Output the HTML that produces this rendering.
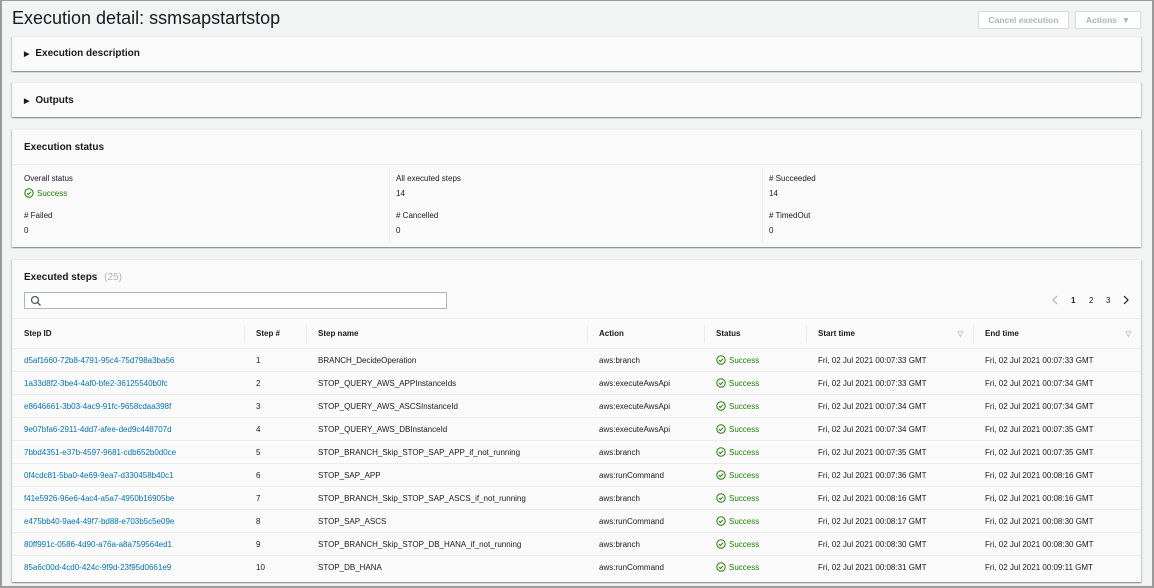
<!DOCTYPE html>
<html><head><meta charset="utf-8"><style>
*{box-sizing:border-box;margin:0;padding:0}
body{width:1154px;height:588px;overflow:hidden;background:#f2f3f3;font-family:"Liberation Sans",sans-serif;color:#16191f;position:relative}
.frame{position:absolute;left:0;top:0;width:1154px;height:588px;border:1px solid #9a9a9a;border-width:1px 2px 2px 2px;pointer-events:none;z-index:5}
.abs{position:absolute}
h1{position:absolute;left:12px;top:8px;font-size:18px;font-weight:normal;color:#16191f}
.btn{position:absolute;top:11px;height:18px;border:1px solid #d5dbdb;background:#fff;color:#aab7b8;font-size:8.5px;font-weight:bold;text-align:center;line-height:16px}
.card{position:absolute;left:12px;width:1129px;background:#fafafa;box-shadow:0 1px 1px 0 rgba(0,28,36,.3),1px 1px 1px 0 rgba(0,28,36,.15),-1px 1px 1px 0 rgba(0,28,36,.15);border-top:1px solid #eaeded}
.ct{position:absolute;font-size:10px;font-weight:bold}
.lbl{position:absolute;font-size:8px;color:#16191f}
.ok{color:#1d8102}
svg.ck{vertical-align:-2px;margin-right:3px}
table{position:absolute;left:0;top:58px;width:1129px;border-collapse:collapse;font-size:8px}
th{text-align:left;font-weight:bold;height:30px;padding-left:12px;color:#16191f;border-top:1px solid #eaeded;border-bottom:1px solid #eaeded;position:relative;font-size:8px}
td{height:23px;padding-left:12px;border-bottom:1px solid #eaeded}
th .d{position:absolute;left:0;top:6px;height:18px;border-left:1px solid #eaeded}
td.id{color:#0073bb}
.tri{position:absolute;right:10px;top:11px;color:#aab7b8;font-size:7px}
</style></head><body>
<div class="frame"></div>
<h1>Execution detail: ssmsapstartstop</h1>
<div class="btn" style="left:978px;width:91px">Cancel execution</div>
<div class="btn" style="left:1075px;width:66px">Actions &nbsp;▼</div>

<div class="card" style="top:36px;height:35px"><div class="ct" style="left:12px;top:11px"><span style="font-size:7px;margin-right:6px">▶</span>Execution description</div></div>
<div class="card" style="top:82px;height:35px"><div class="ct" style="left:12px;top:12px"><span style="font-size:7px;margin-right:6px">▶</span>Outputs</div></div>

<div class="card" style="top:129px;height:118px">
<div class="ct" style="left:12px;top:12px">Execution status</div>
<div class="abs" style="left:0;top:34px;width:1129px;border-top:1px solid #eaeded"></div>
<div class="abs" style="left:377px;top:38px;height:74px;border-left:1px solid #eaeded"></div>
<div class="abs" style="left:750px;top:38px;height:74px;border-left:1px solid #eaeded"></div>
<div class="lbl" style="left:12px;top:44px">Overall status</div>
<div class="lbl ok" style="left:12px;top:58px"><svg class="ck" width="10" height="10" viewBox="0 0 10 10"><circle cx="5" cy="5" r="4.2" fill="none" stroke="#1d8102" stroke-width="1"/><path d="M3 5.1l1.4 1.4L7 3.8" fill="none" stroke="#1d8102" stroke-width="1"/></svg>Success</div>
<div class="lbl" style="left:12px;top:81px"># Failed</div>
<div class="lbl" style="left:12px;top:96px">0</div>
<div class="lbl" style="left:384px;top:44px">All executed steps</div>
<div class="lbl" style="left:384px;top:59px">14</div>
<div class="lbl" style="left:384px;top:81px"># Cancelled</div>
<div class="lbl" style="left:384px;top:96px">0</div>
<div class="lbl" style="left:757px;top:44px"># Succeeded</div>
<div class="lbl" style="left:757px;top:59px">14</div>
<div class="lbl" style="left:757px;top:81px"># TimedOut</div>
<div class="lbl" style="left:757px;top:96px">0</div>
</div>

<div class="card" style="top:259px;height:323px">
<div class="ct" style="left:12px;top:12px">Executed steps <span style="font-weight:normal;color:#aab7b8;margin-left:4px">(25)</span></div>
<div class="abs" style="left:12px;top:32px;width:423px;height:17px;border:1px solid #aab7b8;background:#fff"><svg width="12" height="12" viewBox="0 0 12 12" style="position:absolute;left:5px;top:2px"><circle cx="5" cy="5" r="3.5" fill="none" stroke="#545b64" stroke-width="1.3"/><path d="M7.5 7.5l3 3" stroke="#545b64" stroke-width="1.3"/></svg></div>
<svg class="abs" style="left:1040px;top:34px" width="80" height="12" viewBox="0 0 80 12"><path d="M5 2L1 6l4 4" fill="none" stroke="#aab7b8" stroke-width="1.2"/><text x="19" y="9" font-size="8" font-weight="bold" fill="#16191f" font-family="Liberation Sans">1</text><text x="37" y="9" font-size="8" fill="#16191f" font-family="Liberation Sans">2</text><text x="54" y="9" font-size="8" fill="#16191f" font-family="Liberation Sans">3</text><path d="M72 2l4 4-4 4" fill="none" stroke="#16191f" stroke-width="1.2"/></svg>
<table>
<tr><th style="width:232px">Step ID</th><th style="width:62px"><span class="d"></span>Step #</th><th style="width:281px"><span class="d"></span>Step name</th><th style="width:117px"><span class="d"></span>Action</th><th style="width:102px"><span class="d"></span>Status</th><th style="width:167px"><span class="d"></span>Start time<span class="tri">▽</span></th><th><span class="d"></span>End time<span class="tri">▽</span></th></tr>
<tr><td class="id">d5af1660-72b8-4791-95c4-75d798a3ba56</td><td>1</td><td>BRANCH_DecideOperation</td><td>aws:branch</td><td class="ok"><svg class="ck" width="10" height="10" viewBox="0 0 10 10"><circle cx="5" cy="5" r="4.2" fill="none" stroke="#1d8102"/><path d="M3 5.1l1.4 1.4L7 3.8" fill="none" stroke="#1d8102"/></svg>Success</td><td>Fri, 02 Jul 2021 00:07:33 GMT</td><td>Fri, 02 Jul 2021 00:07:33 GMT</td></tr>
<tr><td class="id">1a33d8f2-3be4-4af0-bfe2-36125540b0fc</td><td>2</td><td>STOP_QUERY_AWS_APPInstanceIds</td><td>aws:executeAwsApi</td><td class="ok"><svg class="ck" width="10" height="10" viewBox="0 0 10 10"><circle cx="5" cy="5" r="4.2" fill="none" stroke="#1d8102"/><path d="M3 5.1l1.4 1.4L7 3.8" fill="none" stroke="#1d8102"/></svg>Success</td><td>Fri, 02 Jul 2021 00:07:33 GMT</td><td>Fri, 02 Jul 2021 00:07:34 GMT</td></tr>
<tr><td class="id">e8646661-3b03-4ac9-91fc-9658cdaa398f</td><td>3</td><td>STOP_QUERY_AWS_ASCSInstanceId</td><td>aws:executeAwsApi</td><td class="ok"><svg class="ck" width="10" height="10" viewBox="0 0 10 10"><circle cx="5" cy="5" r="4.2" fill="none" stroke="#1d8102"/><path d="M3 5.1l1.4 1.4L7 3.8" fill="none" stroke="#1d8102"/></svg>Success</td><td>Fri, 02 Jul 2021 00:07:34 GMT</td><td>Fri, 02 Jul 2021 00:07:34 GMT</td></tr>
<tr><td class="id">9e07bfa6-2911-4dd7-afee-ded9c448707d</td><td>4</td><td>STOP_QUERY_AWS_DBInstanceId</td><td>aws:executeAwsApi</td><td class="ok"><svg class="ck" width="10" height="10" viewBox="0 0 10 10"><circle cx="5" cy="5" r="4.2" fill="none" stroke="#1d8102"/><path d="M3 5.1l1.4 1.4L7 3.8" fill="none" stroke="#1d8102"/></svg>Success</td><td>Fri, 02 Jul 2021 00:07:34 GMT</td><td>Fri, 02 Jul 2021 00:07:35 GMT</td></tr>
<tr><td class="id">7bbd4351-e37b-4597-9681-cdb652b0d0ce</td><td>5</td><td>STOP_BRANCH_Skip_STOP_SAP_APP_if_not_running</td><td>aws:branch</td><td class="ok"><svg class="ck" width="10" height="10" viewBox="0 0 10 10"><circle cx="5" cy="5" r="4.2" fill="none" stroke="#1d8102"/><path d="M3 5.1l1.4 1.4L7 3.8" fill="none" stroke="#1d8102"/></svg>Success</td><td>Fri, 02 Jul 2021 00:07:35 GMT</td><td>Fri, 02 Jul 2021 00:07:35 GMT</td></tr>
<tr><td class="id">0f4cdc81-5ba0-4e69-9ea7-d330458b40c1</td><td>6</td><td>STOP_SAP_APP</td><td>aws:runCommand</td><td class="ok"><svg class="ck" width="10" height="10" viewBox="0 0 10 10"><circle cx="5" cy="5" r="4.2" fill="none" stroke="#1d8102"/><path d="M3 5.1l1.4 1.4L7 3.8" fill="none" stroke="#1d8102"/></svg>Success</td><td>Fri, 02 Jul 2021 00:07:36 GMT</td><td>Fri, 02 Jul 2021 00:08:16 GMT</td></tr>
<tr><td class="id">f41e5926-96e6-4ac4-a5a7-4950b16905be</td><td>7</td><td>STOP_BRANCH_Skip_STOP_SAP_ASCS_if_not_running</td><td>aws:branch</td><td class="ok"><svg class="ck" width="10" height="10" viewBox="0 0 10 10"><circle cx="5" cy="5" r="4.2" fill="none" stroke="#1d8102"/><path d="M3 5.1l1.4 1.4L7 3.8" fill="none" stroke="#1d8102"/></svg>Success</td><td>Fri, 02 Jul 2021 00:08:16 GMT</td><td>Fri, 02 Jul 2021 00:08:16 GMT</td></tr>
<tr><td class="id">e475bb40-9ae4-49f7-bd88-e703b5c5e09e</td><td>8</td><td>STOP_SAP_ASCS</td><td>aws:runCommand</td><td class="ok"><svg class="ck" width="10" height="10" viewBox="0 0 10 10"><circle cx="5" cy="5" r="4.2" fill="none" stroke="#1d8102"/><path d="M3 5.1l1.4 1.4L7 3.8" fill="none" stroke="#1d8102"/></svg>Success</td><td>Fri, 02 Jul 2021 00:08:17 GMT</td><td>Fri, 02 Jul 2021 00:08:30 GMT</td></tr>
<tr><td class="id">80ff991c-0586-4d90-a76a-a8a759564ed1</td><td>9</td><td>STOP_BRANCH_Skip_STOP_DB_HANA_if_not_running</td><td>aws:branch</td><td class="ok"><svg class="ck" width="10" height="10" viewBox="0 0 10 10"><circle cx="5" cy="5" r="4.2" fill="none" stroke="#1d8102"/><path d="M3 5.1l1.4 1.4L7 3.8" fill="none" stroke="#1d8102"/></svg>Success</td><td>Fri, 02 Jul 2021 00:08:30 GMT</td><td>Fri, 02 Jul 2021 00:08:30 GMT</td></tr>
<tr><td class="id" style="border:0">85a6c00d-4cd0-424c-9f9d-23f95d0661e9</td><td style="border:0">10</td><td style="border:0">STOP_DB_HANA</td><td style="border:0">aws:runCommand</td><td class="ok" style="border:0"><svg class="ck" width="10" height="10" viewBox="0 0 10 10"><circle cx="5" cy="5" r="4.2" fill="none" stroke="#1d8102"/><path d="M3 5.1l1.4 1.4L7 3.8" fill="none" stroke="#1d8102"/></svg>Success</td><td style="border:0">Fri, 02 Jul 2021 00:08:31 GMT</td><td style="border:0">Fri, 02 Jul 2021 00:09:11 GMT</td></tr>
</table>
</div>
</body></html>
